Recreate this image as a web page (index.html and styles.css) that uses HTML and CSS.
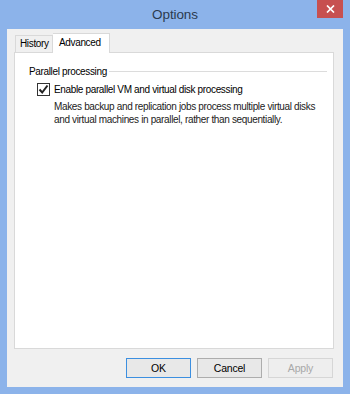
FILE: index.html
```html
<!DOCTYPE html>
<html lang="en">
<head>
  <meta charset="UTF-8" />
  <title>Options</title>
  <link rel="stylesheet" href="styles.css">
</head>
<body>
  <div class="window">
    <div class="titlebar">
      <span class="title">Options</span>
      <button class="close-btn" aria-label="Close">
        <svg width="9" height="8" viewBox="0 0 9 8"><path d="M1 0.5 L8 7.5 M8 0.5 L1 7.5" stroke="#fff" stroke-width="1.7"/></svg>
      </button>
    </div>
    <div class="client">
      <div class="tabs">
        <div class="tab">History</div>
        <div class="tab selected">Advanced</div>
      </div>
      <div class="pane">
        <div class="group-title"><span>Parallel processing</span></div>
        <label class="check-row">
          <span class="checkbox">
            <svg width="11" height="11" viewBox="0 0 11 11"><path d="M1.5 5.5 L4.2 8.5 L9.5 1.5" fill="none" stroke="#222" stroke-width="2"/></svg>
          </span>
          <span>Enable parallel VM and virtual disk processing</span>
        </label>
        <p class="hint">Makes backup and replication jobs process multiple virtual disks and virtual machines in parallel, rather than sequentially.</p>
      </div>
      <div class="buttons">
        <button class="btn default">OK</button>
        <button class="btn">Cancel</button>
        <button class="btn" disabled>Apply</button>
      </div>
    </div>
  </div>
</body>
</html>
```

FILE: styles.css
```css
* { box-sizing: border-box; margin: 0; padding: 0; }
body {
  font-family: "Liberation Sans", Arial, sans-serif;
  font-size: 10px;
  letter-spacing: -0.35px;
  color: #000;
  background: #fff;
}
.window {
  width: 350px;
  height: 394px;
  background: #8cb3ea;
  padding: 0 7px 7px 7px;
  display: flex;
  flex-direction: column;
}
/* Title bar */
.titlebar {
  height: 29px;
  display: flex;
  align-items: center;
  justify-content: center;
  position: relative;
}
.title {
  font-size: 13.5px;
  letter-spacing: -0.1px;
  color: #2b3a4f;
  margin-top: -1px;
}
.close-btn {
  position: absolute;
  top: 0;
  right: 0;
  width: 26px;
  height: 18px;
  background: #c75050;
  border: none;
  display: flex;
  align-items: center;
  justify-content: center;
}
/* Client area */
.client {
  flex: 1;
  background: #f0f0f0;
  padding: 4px 9px 0 7px;
  display: flex;
  flex-direction: column;
}
.tabs {
  height: 19px;
  display: flex;
  align-items: flex-end;
  padding-left: 1px;
}
.tab {
  height: 17px;
  width: 38px;
  padding-left: 4px;
  border: 1px solid #d9d9d9;
  border-bottom: none;
  background: #f0f0f0;
  line-height: 16px;
  color: #000;
}
.tab.selected {
  height: 20px;
  width: 57px;
  margin-bottom: -1px;
  padding-left: 6px;
  background: #fff;
  border-left: none;
  position: relative;
  z-index: 1;
  line-height: 18px;
}
.pane {
  height: 297px;
  background: #fff;
  border: 1px solid #d9d9d9;
  padding: 11px 6px 0 14px;
}
.group-title {
  display: flex;
  align-items: center;
  gap: 2px;
  height: 14px;
}
.group-title::after {
  content: "";
  flex: 1;
  border-top: 1px solid #dcdcdc;
  margin-top: 1px;
}
.check-row {
  display: flex;
  align-items: center;
  gap: 4px;
  margin: 4px 0 0 8px;
  height: 15px;
}
.checkbox {
  width: 13px;
  height: 13px;
  border: 1px solid #333;
  background: #fff;
  display: flex;
  align-items: center;
  justify-content: center;
}
.hint {
  margin: 3px 0 0 25px;
  line-height: 13px;
  color: #222;
  width: 275px;
}
/* Dialog buttons */
.buttons {
  display: flex;
  justify-content: flex-end;
  gap: 6px;
  margin: 9px 1px 0 0;
}
.btn {
  width: 65px;
  height: 20px;
  font-family: inherit;
  font-size: 10.5px;
  letter-spacing: -0.2px;
  background: #e8e8e8;
  border: 1px solid #adadad;
  color: #000;
}
.btn.default {
  border-color: #3c8fe0;
}
.btn:disabled {
  color: #a8a8a8;
  border-color: #d6d6d6;
  background: #eeeeee;
}
```
